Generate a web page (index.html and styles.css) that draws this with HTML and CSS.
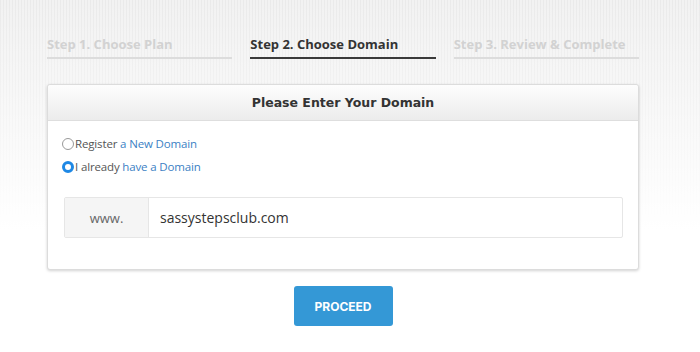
FILE: index.html
```html
<!DOCTYPE html>
<html lang="en">
<head>
    <meta charset="UTF-8">
    <meta name="viewport" content="width=device-width, initial-scale=1.0">
    <title>Choose Domain</title>
    <link rel="stylesheet" href="styles.css">
</head>
<body>
    <div class="container">
        <div class="steps">
            <div class="step">Step 1. Choose Plan</div>
            <div class="step active">Step 2. Choose Domain</div>
            <div class="step">Step 3. Review &amp; Complete</div>
        </div>

        <div class="panel">
            <div class="panel-heading">Please Enter Your Domain</div>
            <div class="panel-body">
                <label class="radio">
                    <span class="dot"></span>Register&nbsp;<a href="#">a New Domain</a>
                </label>
                <label class="radio">
                    <span class="dot checked"></span>I already&nbsp;<a href="#">have a Domain</a>
                </label>

                <div class="input-group">
                    <div class="addon">www.</div>
                    <div class="field">sassystepsclub.com</div>
                </div>
            </div>
        </div>

        <div class="actions">
            <button>PROCEED</button>
        </div>
    </div>
</body>
</html>
```

FILE: styles.css
```css
body {
    margin: 0;
    font-family: "Open Sans", Arial, sans-serif;
    color: #333;
    height: 352px;
    background-color: #fff;
    background-image:
        linear-gradient(to bottom, rgba(255,255,255,0) 0, #fff 230px),
        repeating-linear-gradient(to right, #eaeaea 0, #eaeaea 1px, #f2f2f2 1px, #f2f2f2 3px);
}
.container {
    width: 592px;
    margin-left: 47px;
    padding-top: 35px;
}
.steps {
    display: flex;
    gap: 18px;
}
.step {
    flex: 1;
    font-size: 13px;
    font-weight: 700;
    line-height: 18px;
    padding-bottom: 4px;
    color: #d2d2d2;
    border-bottom: 2px solid #dcdcdc;
}
.step.active {
    color: #333;
    border-bottom-color: #3a3a3a;
}
.panel {
    margin-top: 25px;
    background: #fff;
    border: 1px solid #dcdcdc;
    border-radius: 3px;
    box-shadow: 0 1px 3px rgba(0, 0, 0, 0.18);
}
.panel-heading {
    height: 35px;
    line-height: 35px;
    text-align: center;
    font-family: "DejaVu Sans", "Open Sans", sans-serif;
    font-weight: 700;
    font-size: 12.5px;
    color: #333;
    background: linear-gradient(to bottom, #fdfdfd, #ececec);
    border-bottom: 1px solid #dedede;
    border-radius: 3px 3px 0 0;
}
.panel-body {
    padding: 11px 15px 31px 14px;
}
.radio {
    display: flex;
    align-items: center;
    font-size: 11.5px;
    letter-spacing: -0.15px;
    line-height: 23px;
    color: #555;
}
.radio a {
    color: #3b7fc4;
    text-decoration: none;
}
.dot {
    width: 12px;
    height: 12px;
    border: 1px solid #999;
    border-radius: 50%;
    margin-right: 1px;
    box-sizing: border-box;
    background: #fff;
}
.dot.checked {
    border: 3.5px solid #1e88e5;
}
.input-group {
    display: flex;
    margin-top: 19px;
    margin-left: 2px;
    height: 41px;
    border: 1px solid #e6e6e6;
    border-radius: 2px;
    box-sizing: border-box;
}
.addon {
    width: 83px;
    background: #f5f5f5;
    border-right: 1px solid #e6e6e6;
    color: #666;
    font-size: 13px;
    display: flex;
    align-items: center;
    justify-content: center;
}
.field {
    flex: 1;
    padding-left: 11px;
    display: flex;
    align-items: center;
    font-size: 14px;
    color: #333;
}
.actions {
    display: flex;
    justify-content: center;
    margin-top: 16px;
}
button {
    width: 99px;
    height: 40px;
    background-color: #3498d6;
    color: #fff;
    border: none;
    border-radius: 3px;
    font-family: "Inter", "Open Sans", sans-serif;
    font-weight: 700;
    font-size: 12px;
    cursor: pointer;
}
```
